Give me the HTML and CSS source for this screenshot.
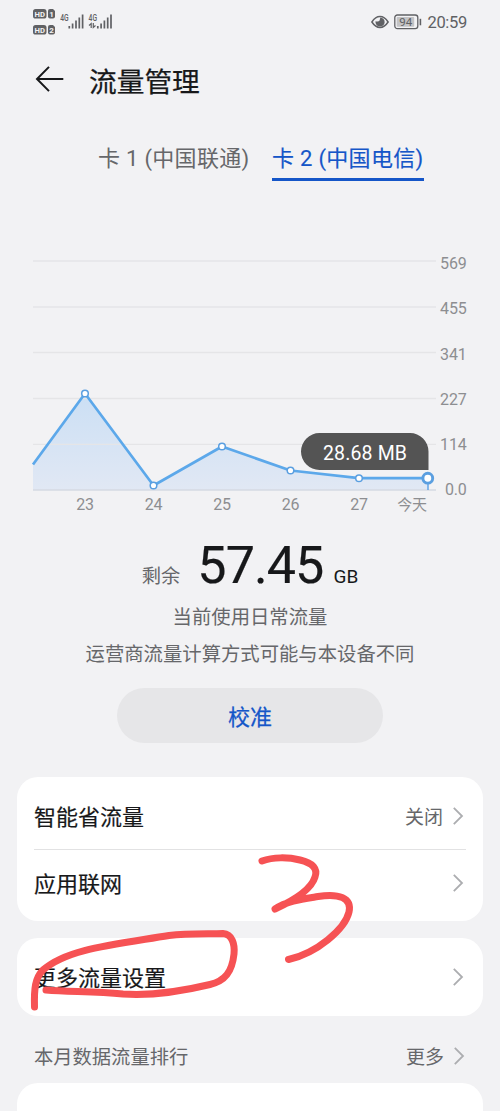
FILE: index.html
```html
<!DOCTYPE html>
<html lang="zh-CN">
<head>
<meta charset="utf-8">
<meta name="viewport" content="width=device-width, initial-scale=1">
<title>流量管理</title>
<link rel="stylesheet" href="styles.css">
</head>
<body>
<main class="screen">
  <div class="status">
    <svg class="signals" width="82" height="28" viewBox="0 0 82 28">
      <g fill="#606164">
        <rect x="0" y="1" width="13.5" height="9.6" rx="2.6"/>
        <path d="M17 1h3l2 2v5.600a2 2 0 0 1-2 2h-3a2 2 0 0 1-2-2V3a2 2 0 0 1 2-2Z"/>
        <rect x="0" y="17" width="13.5" height="9.6" rx="2.6"/>
        <path d="M17 17h3l2 2v5.600a2 2 0 0 1-2 2h-3a2 2 0 0 1-2-2V19a2 2 0 0 1 2-2Z"/>
      </g>
      <g class="badge-text">
        <text x="1.6" y="8.8" textLength="10.400" lengthAdjust="spacingAndGlyphs">HD</text><text x="16.2" y="8.8">1</text>
        <text x="1.6" y="24.8" textLength="10.400" lengthAdjust="spacingAndGlyphs">HD</text><text x="16.2" y="24.8">2</text>
      </g>
      <g class="net-text"><text x="27.3" y="12.5" textLength="8.4" lengthAdjust="spacingAndGlyphs">4G</text><text x="55.6" y="12.5" textLength="8.4" lengthAdjust="spacingAndGlyphs">4G</text></g>
      <g stroke="#606164" stroke-width="1.7">
        <path d="M36.3 18v2.4M39.6 15.5v4.9M43 12.5v7.9M46.3 9.5v10.9M49.6 6.5v13.9"/>
        <path d="M64.8 18v2.4M68.1 15.5v4.9M71.4 12.5v7.9M74.7 9.5v10.9M78 6.5v13.9"/>
      </g>
      <path d="M56 17.500l2.200-2v4.500M60.300 15v4.500l2.200-2" fill="none" stroke="#606164" stroke-width="1.2"/>
    </svg>
    <div class="status-right">
      <svg width="18" height="14" viewBox="0 0 18 14">
        <path d="M.9 7Q4.400 1.600 9 1.600T17.100 7Q13.600 12.400 9 12.400T.9 7Z" fill="none" stroke="#606164" stroke-width="1.5"/>
        <path d="M9.300 2.400A4.600 4.600 0 1 1 4.500 6.300Q7.600 7.200 8.600 5.500Q9 4 9.300 2.400Z" fill="#606164"/>
      </svg>
      <svg class="battery" width="28" height="16" viewBox="0 0 28 16">
        <rect x=".8" y="1" width="23" height="13.600" rx="2.600" fill="none" stroke="#606164" stroke-width="1.300"/>
        <rect x="2.700" y="2.900" width="17.500" height="9.800" rx="1" fill="#c3c3c5"/>
        <path d="M26.400 4.800v6.500" stroke="#606164" stroke-width="1.600"/>
        <text x="5.200" y="11.900">94</text>
      </svg>
      <span class="clock">20:59</span>
    </div>
  </div>

  <header class="header">
    <svg width="30" height="28" viewBox="0 0 30 28"><path d="M28.300 14H2M14 1.900L2 14L14 26.100" fill="none" stroke="#17181a" stroke-width="2"/></svg>
    <h1 class="title">流量管理</h1>
  </header>

  <nav class="tabs">
    <span class="tab">卡 1 (中国联通)</span>
    <span class="tab active">卡 2 (中国电信)</span>
  </nav>

  <svg class="chart" width="500" height="280" viewBox="0 240 500 280">
    <defs><linearGradient id="area" x1="0" y1="0" x2="0" y2="1"><stop offset="0" stop-color="#cbdff4"/><stop offset="1" stop-color="#e1e8f4"/></linearGradient></defs>
    <path d="M33 464L85 393.500L153.500 485.500L222 446.500L290.500 470.500L359 478.200H428V490H33Z" fill="url(#area)"/>
    <path class="grid" d="M33 261H436M33 307H436M33 352.500H436M33 398.500H436M33 444.300H436"/>
    <path d="M33 490H436" stroke="#d5dae3" stroke-width="1.500"/>
    <path d="M428 478V490" stroke="#62a5e8" stroke-width="1.500"/>
    <path d="M33 464.500L85 393.500L153.500 485.500L222 446.500L290.500 470.500L359 478.200H428" fill="none" stroke="#5ca8ea" stroke-width="2.700" stroke-linejoin="round"/>
    <g fill="#fff" stroke="#5b9fe0" stroke-width="1.500">
      <circle cx="85" cy="393.500" r="3.300"/><circle cx="153.500" cy="485.500" r="3.300"/><circle cx="222" cy="446.500" r="3.300"/><circle cx="290.500" cy="470.500" r="3.300"/><circle cx="359" cy="478.200" r="3.300"/>
      <circle cx="427.800" cy="478.200" r="4.900" stroke-width="2.900"/>
    </g>
    <path d="M319.500 433H410A18.500 18.500 0 0 1 428.500 451.500V470H319.500A18.500 18.500 0 0 1 319.500 433Z" fill="#545454"/>
    <text class="tip" x="365" y="459.500" textLength="84">28.68 MB</text>
    <g class="days">
      <text x="85" y="510">23</text><text x="153.500" y="510">24</text><text x="222" y="510">25</text><text x="290.500" y="510">26</text><text x="359" y="510">27</text><text class="today" x="412" y="510">今天</text>
    </g>
    <g class="values">
      <text x="466.500" y="268.500">569</text><text x="466.500" y="314">455</text><text x="466.500" y="359.500">341</text><text x="466.500" y="404.500">227</text><text x="466.500" y="450">114</text><text x="466.500" y="495.300">0.0</text>
    </g>
  </svg>

  <section class="summary">
    <div class="remain"><span class="label">剩余</span><span class="amount">57.45</span><span class="unit">GB</span></div>
    <p class="note">当前使用日常流量</p>
    <p class="note">运营商流量计算方式可能与本设备不同</p>
    <button class="calibrate">校准</button>
  </section>

  <section class="card">
    <div class="row"><span class="name">智能省流量</span><span class="value">关闭</span><svg class="chevron" viewBox="0 0 12 20"><path d="M1.800 1.800L10 10L1.800 18.200"/></svg></div>
    <div class="row second"><span class="name">应用联网</span><svg class="chevron" viewBox="0 0 12 20"><path d="M1.800 1.800L10 10L1.800 18.200"/></svg></div>
  </section>
  <section class="card more">
    <div class="row"><span class="name">更多流量设置</span><svg class="chevron" viewBox="0 0 12 20"><path d="M1.800 1.800L10 10L1.800 18.200"/></svg></div>
  </section>
  <div class="ranking"><span class="name">本月数据流量排行</span><span class="value">更多</span><svg class="chevron" viewBox="0 0 12 20"><path d="M1.800 1.800L10 10L1.800 18.200"/></svg></div>
  <section class="card last"></section>

  <svg class="marks" width="500" height="1111" viewBox="0 0 500 1111">
    <path d="M262 861C273 857 288 857 300 860C313 863 318 869 315 877C312 887 299 898 275 909C287 901 303 899 318 896.500C339 893 352 898 349 912C345 929 317 953 288.500 959.500" stroke-width="7"/>
    <path d="M34.500 1007C34 989 35 978 43 970C67 949 111 945 169 935.500C187 933.500 207 934 223 933.500C232 934 235 944 234 954C232 972 225 981 210 984.500C183 991 151 996 123 994C94 991 69 992 46 990" stroke-width="7"/>
  </svg>
</main>
</body>
</html>
```
FILE: styles.css
```css
* { box-sizing: border-box; }
body { margin: 0; background: #f2f2f4; font-family: Roboto, "Noto Sans CJK SC", sans-serif; }
.screen { position: relative; width: 500px; height: 1111px; overflow: hidden; }
svg { display: block; flex: none; }

.status { height: 44px; padding: 0 33px; display: flex; justify-content: space-between; align-items: center; }
.status-right { display: flex; align-items: center; gap: 6px; }
.status-right > svg:first-child { margin-right: -1px; }
.status-right > .battery { margin-right: -1px; }
.battery text { font-size: 11.5px; fill: #606164; font-weight: 400; }
.badge-text { fill: #f2f2f4; font-size: 8px; font-weight: 700; }
.net-text { fill: #606164; font-size: 9px; font-weight: 500; }
.clock { font-size: 16.5px; line-height: 20px; color: #606164; margin-top: 2px; letter-spacing: -.3px; }

.header { height: 72px; padding: 0 35px; display: flex; align-items: center; gap: 24px; }
.header svg { margin-top: -2px; }
.title { margin: 5px 0 0; font-size: 27.7px; line-height: 36px; font-weight: 400; -webkit-text-stroke: .25px; color: #17181a; }

.tabs { height: 65px; padding-left: 98px; display: flex; gap: 22px; align-items: flex-end; white-space: nowrap; }
.tab { width: 152px; height: 40px; line-height: 36px; font-size: 22px; letter-spacing: .3px; color: #66676a; border-bottom: 3px solid transparent; }
.tab.active { color: #1556c8; border-color: #1556c8; -webkit-text-stroke: .15px; }

.chart { margin-top: 59px; }
.grid { stroke: #e5e5e7; stroke-width: 1.3; }
.tip { fill: #fff; font-size: 19.5px; text-anchor: middle; }
.days { fill: #8d8e91; font-size: 16px; text-anchor: middle; }
.today { font-size: 15px; }
.values { fill: #8d8e91; font-size: 16px; text-anchor: end; }
.days, .values { letter-spacing: -.2px; }

.summary { height: 257px; text-align: center; color: #66676a; }
.remain { height: 78px; padding-top: 16px; display: flex; justify-content: center; align-items: baseline; line-height: 60px; }
.label { font-size: 19.3px; margin-right: 17px; }
.amount { font-size: 52px; color: #17181a; letter-spacing: -.9px; font-weight: 400; -webkit-text-stroke: .2px; }
.unit { font-size: 19px; color: #17181a; margin-left: 10px; }
.note { margin: 0; font-size: 19.35px; line-height: 38px; }
.note:first-of-type { padding-top: 1px; line-height: 37px; }
.calibrate { display: block; width: 266px; height: 55px; margin: 14px auto 0; padding: 0; border: 0; border-radius: 28px; background: #e6e6e8; color: #1556c8; font: 400 22px/53px "Noto Sans CJK SC", sans-serif; -webkit-text-stroke: .25px; }

.card { margin: 0 17px; padding: 0 17px; background: #fff; border-radius: 21px; }
.row { height: 72px; display: flex; align-items: center; padding-top: 5px; }
.row .name { flex: 1; margin-top: -2px; font-size: 22px; color: #17181a; -webkit-text-stroke: .2px; }
.value { font-size: 19px; color: #66676a; margin-right: 9px; }
.chevron { width: 12px; height: 20px; margin-right: 2px; }
.chevron path { fill: none; stroke: #acadb0; stroke-width: 1.8; }
.second { border-top: 1px solid #e2e2e3; padding: 0 0 6px; }
.more { margin-top: 17px; }
.more .row { height: 78px; padding-top: 0; }
.ranking { height: 67px; padding: 12px 33px 0 34px; display: flex; align-items: center; color: #66676a; }
.ranking .name { flex: 1; font-size: 19.3px; }
.last { height: 60px; }
.marks { position: absolute; left: 0; top: 0; pointer-events: none; }
.marks path { fill: none; stroke: #f65254; stroke-linecap: round; stroke-linejoin: round; }
```
